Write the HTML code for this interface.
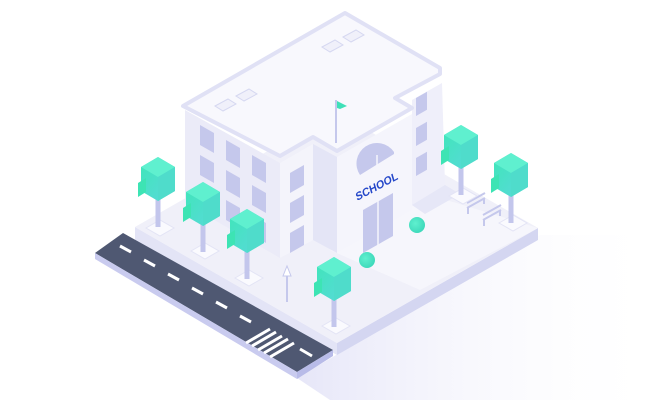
<!DOCTYPE html>
<html><head><style>
html,body{margin:0;padding:0;background:#fff;width:666px;height:400px;overflow:hidden}
svg{display:block}
</style></head><body>
<svg width="666" height="400" viewBox="0 0 666 400" xmlns="http://www.w3.org/2000/svg">
<defs>
<linearGradient id="sh" x1="0" y1="0" x2="1" y2="0">
<stop offset="0" stop-color="#e6e6f8"/><stop offset="1" stop-color="#ffffff" stop-opacity="0"/>
</linearGradient>
<linearGradient id="lf" x1="0" y1="0" x2="1" y2="1">
<stop offset="0" stop-color="#3fe6b8"/><stop offset="1" stop-color="#5ad8dc"/>
</linearGradient>
<g id="tree">
<rect x="-2.5" y="-10" width="5" height="42" fill="#c3c6ec"/>
<polygon points="-17,-28 0,-38 17,-28 17,-4 0,6 -17,-4" fill="url(#lf)"/>
<polygon points="-17,-28 0,-38 17,-28 0,-18" fill="#5ff0cf"/>
<polygon points="0,-18 17,-28 17,-4 0,6" fill="#4fdccb"/>
<polygon points="-20,-12 -12,-17 -12,-3 -20,2" fill="#3de4b4"/>
</g>
<g id="treebase"><polygon points="-14,0 0,-8 14,0 0,8" fill="#fafafe" stroke="#e3e4f5"/></g>
<radialGradient id="bu" cx="0.4" cy="0.4" r="0.7"><stop offset="0" stop-color="#5ff0cf"/><stop offset="1" stop-color="#3ad6b8"/></radialGradient>
</defs>
<polygon points="297,378 540,235 666,235 666,400 330,400" fill="url(#sh)"/>
<polygon points="135,227 337,343 337,355 135,240" fill="#e3e4f6"/>
<polygon points="337,343 538,228 538,240 337,355" fill="#d4d6f1"/>
<polygon points="135,227 336,112 538,228 337,343" fill="#f0f0f9"/>
<polygon points="330,250 430,195 538,228 420,290" fill="#f6f6fc"/>
<polygon points="95,253 123,233 333,350 297,372" fill="#4f5872"/>
<polygon points="95,253 297,372 297,379 95,259" fill="#c9cbef"/>
<polygon points="297,372 333,350 333,356 297,379" fill="#b8bbe8"/>
<g stroke="#ffffff" stroke-width="3">
<line x1="120" y1="246" x2="131" y2="252"/><line x1="144" y1="260" x2="155" y2="266"/>
<line x1="168" y1="274" x2="179" y2="280"/><line x1="192" y1="288" x2="203" y2="294"/>
<line x1="216" y1="302" x2="227" y2="308"/><line x1="240" y1="316" x2="251" y2="322"/>
<line x1="300" y1="349" x2="312" y2="356"/>
<line x1="246" y1="343" x2="270" y2="329"/><line x1="252" y1="346" x2="276" y2="332"/>
<line x1="258" y1="350" x2="282" y2="336"/><line x1="264" y1="353" x2="288" y2="339"/>
<line x1="270" y1="357" x2="294" y2="343"/>
</g>
<polygon points="185,110 280,163 280,258 185,203" fill="#ebebf8"/>
<polygon points="280,163 313,144 313,240 280,258" fill="#f4f4fb"/>
<polygon points="313,144 337,157 337,253 313,240" fill="#e4e5f6"/>
<polygon points="337,157 412,114 412,210 337,253" fill="#f5f5fc"/>
<polygon points="412,100 442,83 445,185 412,205" fill="#efeffa"/>
<polygon points="412,205 445,185 460,194 425,214" fill="#e6e7f7"/>
<polygon points="183,106 345,13 440,68 440,74 395,98 412,108 337,151 313,137 280,156" fill="#f8f8fd" stroke="#e0e1f5" stroke-width="4" stroke-linejoin="round"/>
<g fill="#f0f0fa" stroke="#d6d8f1">
<polygon points="215,106 228,99 236,104 223,111"/><polygon points="236,96 249,89 257,94 244,101"/>
<polygon points="322,47 335,40 343,45 330,52"/><polygon points="343,37 356,30 364,35 351,42"/>
</g>
<g fill="#c5c8ec">
<g transform="matrix(1,0.57,0,1,200,125)"><rect width="14" height="20" y="0"/><rect width="14" height="20" y="30"/><rect width="14" height="20" y="60"/></g>
<g transform="matrix(1,0.57,0,1,226,140)"><rect width="14" height="20" y="0"/><rect width="14" height="20" y="30"/><rect width="14" height="20" y="60"/></g>
<g transform="matrix(1,0.57,0,1,252,155)"><rect width="14" height="20" y="0"/><rect width="14" height="20" y="30"/><rect width="14" height="20" y="60"/></g>
<g transform="matrix(1,-0.57,0,1,290,173)"><rect width="14" height="20" y="0"/><rect width="14" height="20" y="30"/><rect width="14" height="20" y="60"/></g>
<g transform="matrix(1,-0.57,0,1,416,98)"><rect width="11" height="18" y="0"/><rect width="11" height="18" y="30"/><rect width="11" height="18" y="60"/></g>
<path d="M360,175 A18,18 0 0 1 394,152 L394,154 Z" fill="#c5c8ec"/>
<polygon points="363,210 393,193 393,236 363,253" fill="#c5c8ec"/>
</g>
<g stroke="#f5f5fc" stroke-width="1.5"><line x1="378" y1="201" x2="378" y2="245"/><line x1="377" y1="168" x2="377" y2="155"/></g>
<text x="0" y="0" transform="translate(357,201) rotate(-28) skewX(-12)" font-family="Liberation Sans, sans-serif" font-weight="bold" font-size="11" fill="#2447c9">SCHOOL</text>
<line x1="336" y1="100" x2="336" y2="143" stroke="#c5c8ec" stroke-width="2"/>
<polygon points="337,101 347,106 340,109 337,108" fill="#3fe0b8"/>
<circle cx="367" cy="260" r="8" fill="url(#bu)"/>
<circle cx="417" cy="225" r="8" fill="url(#bu)"/>
<g stroke="#c5c8ec" stroke-width="2" fill="none">
<path d="M467,208 L485,198 M467,203 L485,193 M468,208 v6 M484,198 v6"/>
<path d="M483,220 L501,210 M483,215 L501,205 M484,220 v6 M500,210 v6"/>
</g>
<line x1="287" y1="272" x2="287" y2="302" stroke="#c5c8ec" stroke-width="2"/>
<polygon points="283,276 287,266 291,276" fill="#fff" stroke="#c5c8ec"/>
<use href="#treebase" x="160" y="228"/><use href="#treebase" x="205" y="251"/>
<use href="#treebase" x="249" y="278"/><use href="#treebase" x="336" y="326"/>
<use href="#treebase" x="463" y="196"/><use href="#treebase" x="513" y="223"/>
<use href="#tree" x="158" y="195"/>
<use href="#tree" x="203" y="220"/>
<use href="#tree" x="247" y="247"/>
<use href="#tree" x="334" y="295"/>
<use href="#tree" x="461" y="163"/>
<use href="#tree" x="511" y="191"/>
</svg>
</body></html>
